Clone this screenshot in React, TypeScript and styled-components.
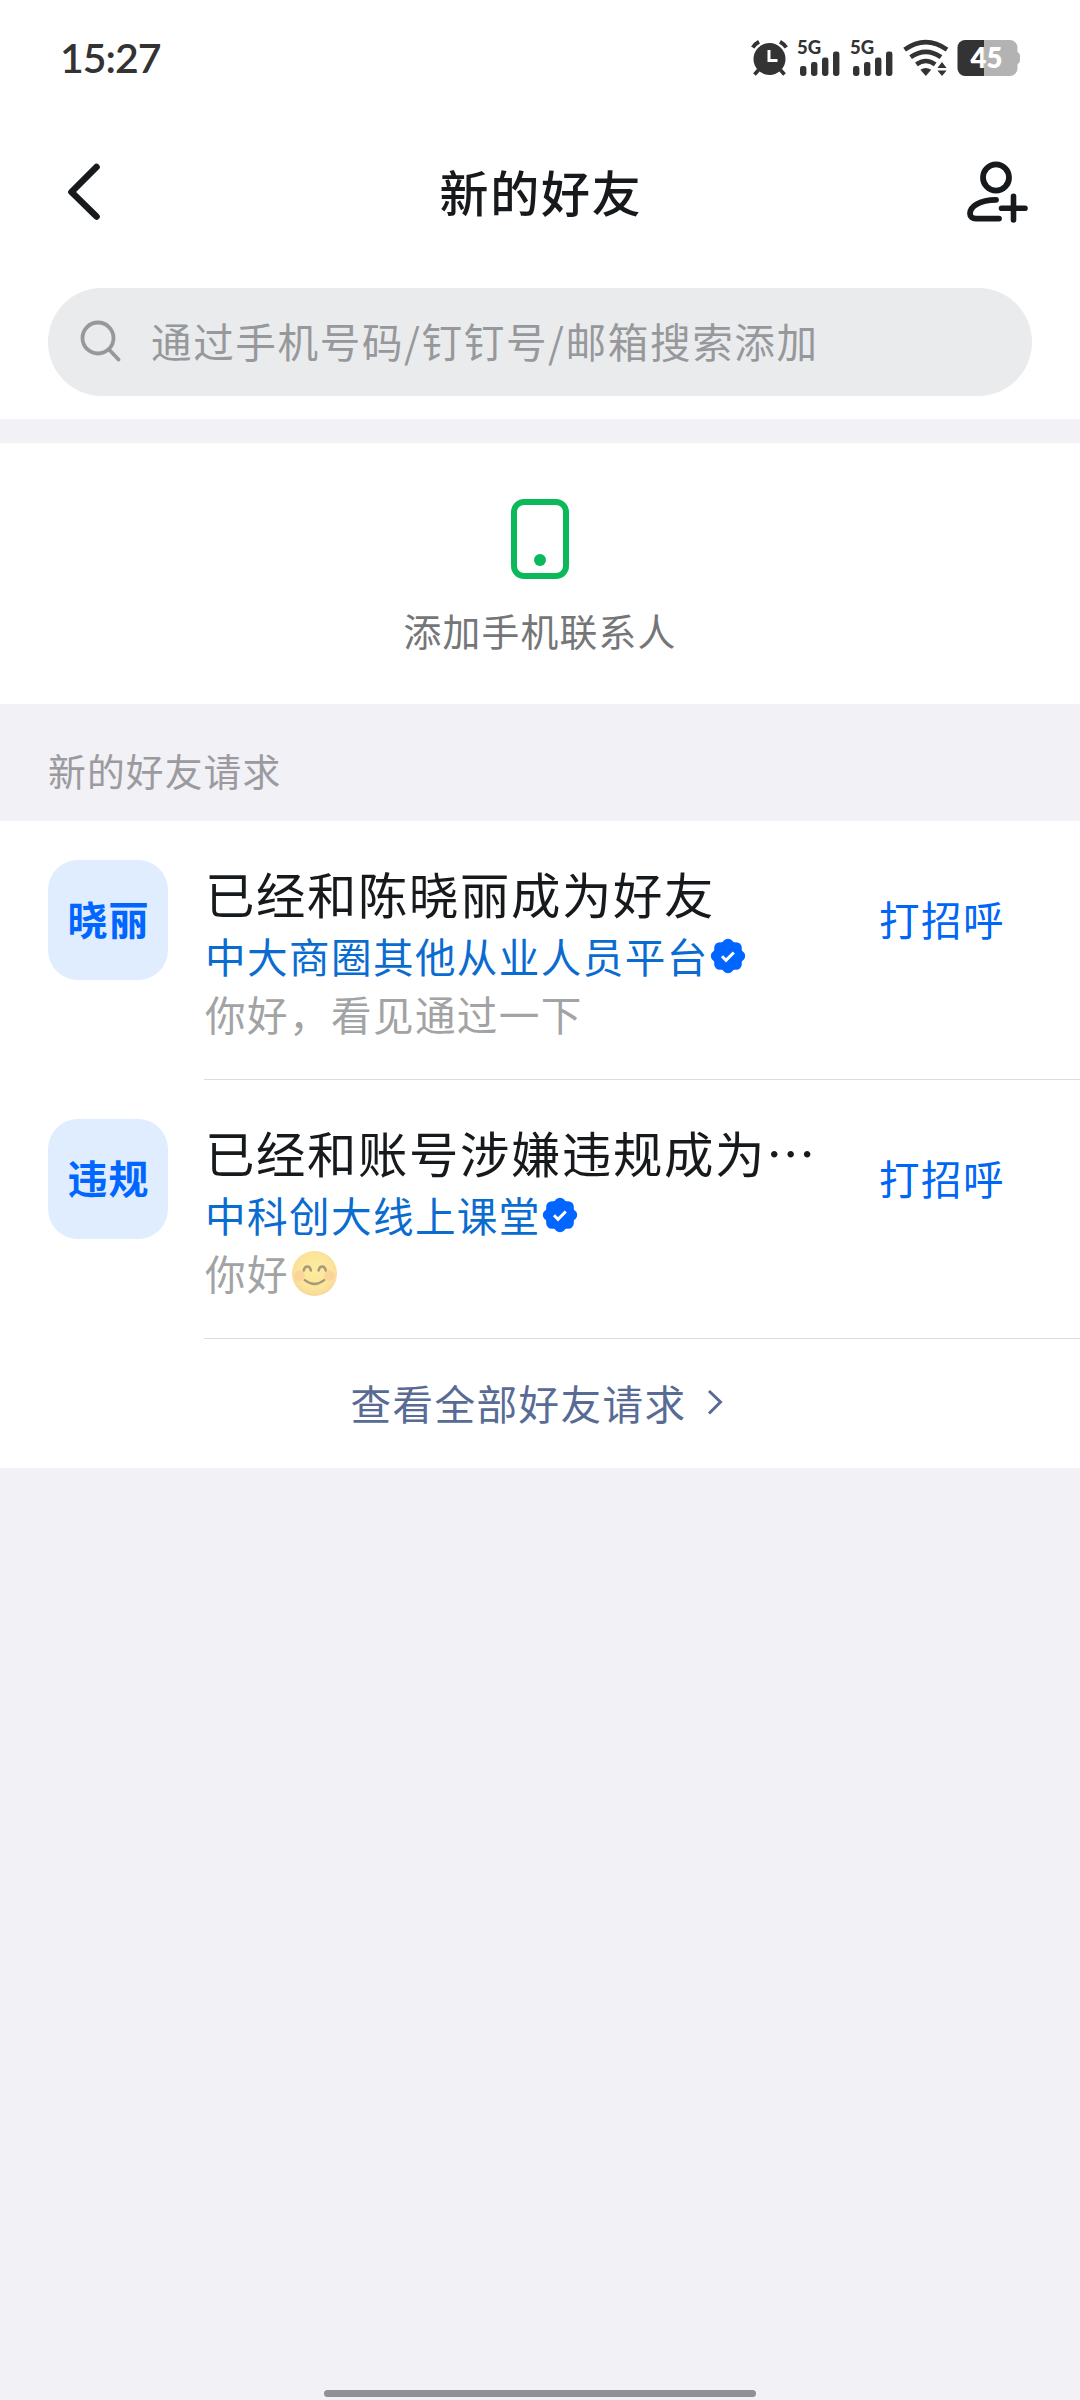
import React from "react";
import styled, { createGlobalStyle } from "styled-components";

const GlobalStyle = createGlobalStyle`
  * { box-sizing: border-box; }
  body { margin: 0; background: #f1f1f6; }
`;

const Screen = styled.div`
  width: 1080px;
  height: 2400px;
  display: flex;
  flex-direction: column;
  background: #f1f1f6;
  font-family: "Noto Sans CJK SC", sans-serif;
  color: #171a1d;
  overflow: hidden;
`;

const Header = styled.header`
  height: 419px;
  background: #fff;
`;

const StatusBar = styled.div`
  height: 116px;
  padding: 0 60px;
  display: flex;
  align-items: center;
  justify-content: space-between;
`;

const Clock = styled.span`
  font-family: Lato, sans-serif;
  font-weight: 600;
  font-size: 41px;
  line-height: 50px;
  letter-spacing: -1px;
  color: #333;
`;

const StatusIcons = styled.svg`
  display: block;
  width: 280px;
  height: 46px;
  margin-right: -10px;
  overflow: visible;
`;

const NavBar = styled.nav`
  height: 172px;
  padding: 0 52px 20px 60px;
  display: grid;
  grid-template-columns: 68px 1fr 68px;
  align-items: center;
`;

const NavButton = styled.button<{ $end?: boolean }>`
  display: flex;
  justify-content: ${(p) => (p.$end ? "flex-end" : "flex-start")};
  padding: 0;
  border: 0;
  background: none;
  color: inherit;
`;

const Title = styled.h1`
  margin: 0;
  padding: 0 6px 2px 0;
  font-size: 49px;
  line-height: 60px;
  font-weight: 500;
  letter-spacing: 1.7px;
  text-align: center;
`;

const SearchBox = styled.div`
  height: 108px;
  margin: 0 48px;
  padding: 0 32px 2px;
  border-radius: 54px;
  display: flex;
  align-items: center;
  gap: 29px;
  background: #eaebed;
  color: #96989b;
  font-size: 40.6px;
  line-height: 60px;
  letter-spacing: 1.6px;
`;

const ContactCard = styled.section`
  height: 261px;
  margin-top: 24px;
  padding-top: 54px;
  display: flex;
  flex-direction: column;
  align-items: center;
  gap: 19px;
  background: #fff;
`;

const ContactLabel = styled.span`
  font-size: 37.8px;
  line-height: 60px;
  letter-spacing: 1.2px;
  color: #747677;
`;

const SectionTitle = styled.h2`
  margin: 0;
  height: 117px;
  padding: 36px 48px 0;
  font-size: 37.8px;
  line-height: 60px;
  font-weight: 400;
  letter-spacing: 1.1px;
  color: #9b9b9f;
`;

const List = styled.ul`
  margin: 0;
  padding: 0;
  list-style: none;
  background: #fff;
`;

const Row = styled.li`
  height: 259px;
  padding-left: 48px;
  display: flex;
  gap: 36px;
`;

const Avatar = styled.div`
  width: 120px;
  height: 120px;
  margin-top: 39px;
  border-radius: 30px;
  display: flex;
  align-items: center;
  justify-content: center;
  padding: 0 0 4px 1px;
  background: #e0edff;
  color: #0066ff;
  font-size: 40px;
  font-weight: 700;
  letter-spacing: 1px;
`;

const RowBody = styled.div`
  flex: 1;
  min-width: 0;
  padding: 42px 75px 0 0;
  display: flex;
  justify-content: space-between;
  border-bottom: 1px solid #dcdcdd;
`;

const Texts = styled.div`
  display: flex;
  flex-direction: column;
  padding-left: 1px;
  white-space: nowrap;
`;

const Name = styled.div`
  font-size: 49.4px;
  line-height: 60px;
  letter-spacing: 1.6px;
`;

const Org = styled.div`
  height: 66px;
  display: flex;
  align-items: center;
  gap: 1px;
  font-size: 40.6px;
  line-height: 66px;
  letter-spacing: 1.4px;
  color: #0a6cd0;
`;

const Message = styled.div`
  height: 50px;
  display: flex;
  align-items: center;
  gap: 3px;
  font-size: 40.6px;
  line-height: 50px;
  letter-spacing: 1.4px;
  color: #a2a3a4;
`;

const GreetButton = styled.button`
  align-self: flex-start;
  margin-top: 26px;
  padding: 0;
  border: 0;
  background: none;
  font: inherit;
  font-size: 40.6px;
  line-height: 60px;
  letter-spacing: 1.4px;
  color: #0066f5;
`;

const ViewAll = styled.button`
  width: 100%;
  height: 129px;
  padding: 0 5px 1px 0;
  border: 0;
  background: #fff;
  display: flex;
  align-items: center;
  justify-content: center;
  gap: 20px;
  font: inherit;
  font-size: 40.6px;
  line-height: 60px;
  letter-spacing: 1.4px;
  color: #576b95;
`;

const HomeIndicator = styled.div`
  width: 432px;
  height: 7px;
  margin: auto auto 3px;
  border-radius: 4px;
  background: #919193;
`;

const bars = [
  { x: 50, y: 26, h: 10 },
  { x: 61, y: 22, h: 14 },
  { x: 72, y: 17.5, h: 18.5 },
  { x: 83, y: 11.5, h: 24.5 },
];

const Signal = ({ offset }: { offset: number }) => (
  <g transform={`translate(${offset} 0)`}>
    <text x="47" y="13.6" fontFamily="Lato, sans-serif" fontWeight="900" fontSize="18.5">5G</text>
    {bars.map((b) => (
      <rect key={b.x} x={b.x} y={b.y} width="6.4" height={b.h} rx="2.4" />
    ))}
  </g>
);

const StatusGlyphs = () => (
  <StatusIcons viewBox="0 0 280 46" fill="#333">
    <g transform="translate(0 5)">
      <circle cx="19.5" cy="19" r="16" />
      <path d="M2.8 7.5Q5 4 9 1.8M36.2 7.5Q34 4 30 1.8" stroke="#333" strokeWidth="4" fill="none" />
      <path d="M8.5 30L4.5 34.5M30.5 30L34.5 34.5" stroke="#333" strokeWidth="3.6" />
      <path d="M19 10V20.5H27.5" stroke="#fff" strokeWidth="3" fill="none" />
      <Signal offset={0} />
      <Signal offset={53} />
      <g fill="none" stroke="#333" strokeWidth="4.6">
        <path d="M154.6 9.6Q175.8 -5.4 197 9.6" />
        <path d="M160.6 17.2Q175.8 6.4 191 17.2" />
        <path d="M166.4 24.4Q175.8 17.6 185.2 24.4" />
      </g>
      <path d="M170.4 29.8Q175.8 26.4 181.2 29.8L175.8 36Z" />
      <path d="M187.4 28L192 22L196.6 28ZM187.4 30.4L192 36L196.6 30.4Z" />
      <path d="M215 0H260A7.5 7.5 0 0 1 267.5 7.5V12Q270 13 270 16V20Q270 23 267.5 24V28.5A7.5 7.5 0 0 1 260 36H215Z" fill="#b3b3b3" />
      <path d="M215 0H234V36H215A7.5 7.5 0 0 1 207.5 28.5V7.5A7.5 7.5 0 0 1 215 0Z" />
      <text x="236.5" y="27.6" textAnchor="middle" fill="#fff" fontFamily="Lato, sans-serif" fontWeight="800" fontSize="27.5">45</text>
    </g>
  </StatusIcons>
);

const BackIcon = () => (
  <svg width="48" height="60" viewBox="0 0 48 60" fill="none" stroke="currentColor" strokeWidth="6.6" strokeLinecap="round" strokeLinejoin="round">
    <path d="M36.5 5L11.5 30L36.500 54.5" />
  </svg>
);

const AddFriendIcon = () => (
  <svg width="64" height="64" viewBox="0 0 64 64" fill="none" stroke="currentColor" strokeWidth="5.8" strokeLinecap="round">
    <ellipse cx="32" cy="17.5" rx="13" ry="13.2" />
    <path d="M32 39.8C15 39.800 6 47 6 53.500C6 56.800 8.500 58.600 12 58.600H35" />
    <path d="M37.5 48.200H61M49.500 36.200V60" strokeWidth="5.600" />
  </svg>
);

const SearchIcon = () => (
  <svg width="42" height="42" viewBox="0 0 42 42" fill="none" stroke="currentColor" strokeWidth="3.800" strokeLinecap="round">
    <circle cx="18" cy="18" r="15.500" />
    <path d="M29 29.500L38.500 39.500" />
  </svg>
);

const PhoneIcon = () => (
  <svg width="60" height="84" viewBox="0 0 60 84">
    <rect x="4" y="5" width="52" height="74" rx="10" fill="none" stroke="#0bb95b" strokeWidth="6" />
    <circle cx="30" cy="63" r="6" fill="#0bb95b" />
  </svg>
);

const Badge = () => (
  <svg width="36" height="36" viewBox="0 0 36 36" fill="#0066ff">
    <circle cx="18" cy="18" r="15" />
    {[0, 45, 90, 135, 180, 225, 270, 315].map((a) => (
      <circle key={a} cx="18" cy="6.600" r="5.800" transform={`rotate(${a} 18 18)`} />
    ))}
    <path d="M12 18.300L16 22.300L23.800 14.500" fill="none" stroke="#fff" strokeWidth="3" />
  </svg>
);

const Smile = () => (
  <svg width="45" height="45" viewBox="0 0 44 44">
    <defs>
      <radialGradient id="face" cx="50%" cy="45%" r="55%">
        <stop offset="0" stopColor="#fdeb9c" />
        <stop offset="0.7" stopColor="#fce59b" />
        <stop offset="1" stopColor="#f8d898" />
      </radialGradient>
    </defs>
    <circle cx="22" cy="22" r="22" fill="url(#face)" />
    <circle cx="7.5" cy="24" r="5" fill="#f8c29a" opacity="0.5" />
    <circle cx="36.5" cy="24" r="5" fill="#f8c29a" opacity="0.5" />
    <g fill="none" stroke="#a8997a" strokeWidth="2.4" strokeLinecap="round">
      <path d="M11.5 19C12.500 14 17.500 14 18.500 19M26 19C27 14 32 14 33 19" />
      <path d="M12.500 28.500Q22 36 31.500 28.500" />
    </g>
  </svg>
);

const ChevronIcon = () => (
  <svg width="18" height="28" viewBox="0 0 18 28" fill="none" stroke="currentColor" strokeWidth="3">
    <path d="M3 2L14.5 13L3 24.5" />
  </svg>
);

const requests = [
  { avatar: "晓丽", name: "已经和陈晓丽成为好友", org: "中大商圈其他从业人员平台", message: "你好，看见通过一下", smile: false },
  { avatar: "违规", name: "已经和账号涉嫌违规成为…", org: "中科创大线上课堂", message: "你好", smile: true },
];

export default function App() {
  return (
    <>
      <GlobalStyle />
      <Screen lang="zh-CN">
        <Header>
          <StatusBar>
            <Clock>15:27</Clock>
            <StatusGlyphs />
          </StatusBar>
          <NavBar>
            <NavButton aria-label="返回"><BackIcon /></NavButton>
            <Title>新的好友</Title>
            <NavButton $end aria-label="添加好友"><AddFriendIcon /></NavButton>
          </NavBar>
          <SearchBox>
            <SearchIcon />
            <span>通过手机号码/钉钉号/邮箱搜索添加</span>
          </SearchBox>
        </Header>
        <ContactCard>
          <PhoneIcon />
          <ContactLabel>添加手机联系人</ContactLabel>
        </ContactCard>
        <SectionTitle>新的好友请求</SectionTitle>
        <List>
          {requests.map((r) => (
            <Row key={r.avatar}>
              <Avatar>{r.avatar}</Avatar>
              <RowBody>
                <Texts>
                  <Name>{r.name}</Name>
                  <Org>{r.org}<Badge /></Org>
                  <Message>{r.message}{r.smile && <Smile />}</Message>
                </Texts>
                <GreetButton>打招呼</GreetButton>
              </RowBody>
            </Row>
          ))}
        </List>
        <ViewAll>查看全部好友请求<ChevronIcon /></ViewAll>
        <HomeIndicator />
      </Screen>
    </>
  );
}
